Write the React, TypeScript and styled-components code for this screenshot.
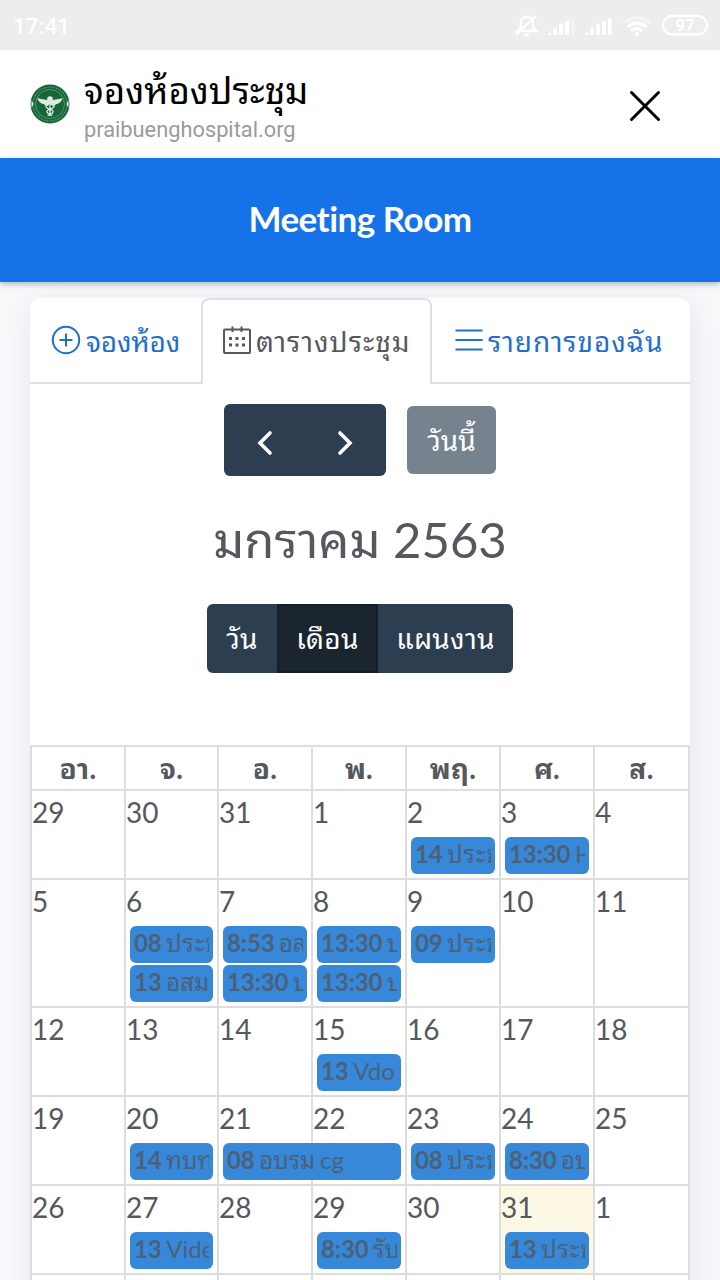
import React from "react";
import styled, { createGlobalStyle } from "styled-components";

const GlobalStyle = createGlobalStyle`
  * { box-sizing: border-box; }
  body {
    margin: 0;
    width: 720px;
    height: 1280px;
    overflow: hidden;
    background: #f8f9fb;
    font-family: Lato, "Noto Sans Thai Looped", "Noto Sans", sans-serif;
    color: #55585e;
  }
`;

const Screen = styled.div`
  width: 720px;
  height: 1280px;
  overflow: hidden;
  display: flex;
  flex-direction: column;
`;

const Thai = styled.span<{ $track?: number }>`
  letter-spacing: ${(p) => p.$track ?? 0}px;
`;

const StatusBar = styled.div`
  height: 50px;
  flex: none;
  display: flex;
  align-items: center;
  justify-content: space-between;
  padding: 1px 11px 0 13px;
  background: #ebedee;
  color: #fff;
  font: 500 22.5px/28px Roboto, sans-serif;
`;

const StatusIcons = styled.svg`
  display: block;
  width: 196px;
  height: 26px;
`;

const BrowserBar = styled.header`
  height: 108px;
  flex: none;
  display: flex;
  background: #fff;
  padding: 0 58px 0 30px;
`;

const Logo = styled.svg`
  width: 40px;
  height: 40px;
  margin-top: 34px;
  flex: none;
`;

const PageInfo = styled.div`
  flex: 1;
  margin-left: 14px;
  display: flex;
  flex-direction: column;
`;

const PageTitle = styled.div`
  height: 48px;
  margin-top: 16px;
  color: #000;
  font-size: 36.7px;
  line-height: 48px;
  white-space: nowrap;
`;

const PageHost = styled.div`
  color: #9b9b9b;
  font: 21.8px/32px Roboto, sans-serif;
`;

const CloseIcon = styled.svg`
  width: 34px;
  height: 34px;
  margin-top: 39px;
`;

const Banner = styled.div`
  height: 124px;
  flex: none;
  position: relative;
  display: flex;
  align-items: center;
  justify-content: center;
  padding-bottom: 4px;
  background: #1572e8;
  box-shadow: 0 2px 6px rgba(60, 70, 90, 0.4);
  color: #fff;
  font-size: 35px;
  font-weight: 700;
  font-variant-ligatures: none;
  letter-spacing: -0.5px;
`;

const Card = styled.main`
  width: 660px;
  flex: 1;
  margin: 16px auto 0;
  border-radius: 10px 10px 0 0;
  background: #fff;
  box-shadow: 2px 4px 30px rgba(50, 60, 80, 0.1);
`;

const Tabs = styled.nav`
  display: flex;
  height: 86px;
`;

const Tab = styled.a<{ $width: number; $active?: boolean }>`
  width: ${(p) => p.$width}px;
  height: 86px;
  display: flex;
  gap: 5px;
  padding: ${(p) => (p.$active ? "25px 0 0 18px" : "27px 0 0 21px")};
  white-space: nowrap;
  font-size: 28px;
  line-height: 33px;
  color: ${(p) => (p.$active ? "#55585e" : "#1f6fcd")};
  border: 0 solid #dee0e3;
  border-width: ${(p) => (p.$active ? "2px 2px 0" : "0 0 2px")};
  border-radius: ${(p) => (p.$active ? "8px 8px 0 0" : "0")};
`;

const TabIcon = styled.svg`
  width: 30px;
  height: 30px;
  flex: none;
  fill: none;
  stroke: currentColor;
  stroke-width: 2;
`;

const Toolbar = styled.div`
  height: 361px;
  display: flex;
  flex-direction: column;
  align-items: center;
`;

const NavRow = styled.div`
  display: flex;
  align-items: center;
  gap: 21px;
  height: 72px;
  margin-top: 20px;
`;

const ArrowGroup = styled.div`
  display: flex;
  width: 162px;
  height: 72px;
  border-radius: 6px;
  background: #2c3e50;
`;

const ArrowButton = styled.button`
  flex: 1;
  border: 0;
  padding: 8px 0 0;
  background: none;
  color: #fff;
`;

const TodayButton = styled.button`
  width: 89px;
  height: 68px;
  border: 0;
  border-radius: 6px;
  padding: 0 0 4px;
  background: #76828e;
  color: #fff;
  font: inherit;
  font-size: 28px;
`;

const MonthTitle = styled.h2`
  height: 72px;
  margin: 27px 0 0;
  font-size: 49px;
  font-weight: 400;
  line-height: 72px;
  white-space: nowrap;
`;

const ViewSwitch = styled.div`
  display: flex;
  height: 69px;
  margin-top: 29px;
  border-radius: 6px;
  overflow: hidden;
  background: #2c3e50;
`;

const ViewButton = styled.button<{ $width: number; $active?: boolean }>`
  width: ${(p) => p.$width}px;
  border: ${(p) => (p.$active ? "2px solid #151e27" : "0")};
  padding: 0 0 4px;
  background: ${(p) => (p.$active ? "#1a252f" : "none")};
  color: #fff;
  font: inherit;
  font-size: 28px;
`;

const Calendar = styled.section`
  border: solid #ddd;
  border-width: 2px 0 0 2px;
`;

const columns = "94px 93px 94px 94px 94px 94px 95px";

const HeadRow = styled.div`
  display: grid;
  grid-template-columns: ${columns};
  height: 44px;
`;

const HeadCell = styled.div`
  border: solid #ddd;
  border-width: 0 2px 2px 0;
  text-align: center;
  font-size: 28px;
  font-weight: 700;
  line-height: 42px;
`;

const WeekRow = styled.div<{ $lines: number }>`
  display: grid;
  grid-template-columns: ${columns};
  grid-template-rows: 44px repeat(${(p) => p.$lines}, 37px) 4px;
  row-gap: 2px;
`;

const Day = styled.div<{ $col: number; $today?: boolean }>`
  grid-column: ${(p) => p.$col};
  grid-row: 1 / -1;
  border: solid #ddd;
  border-width: 0 2px 2px 0;
  background: ${(p) => (p.$today ? "#fcf8e3" : "#fff")};
  font-size: 28px;
  line-height: 43px;
`;

const Event = styled.div<{ $col: number; $span: number; $line: number }>`
  grid-column: ${(p) => p.$col} / span ${(p) => p.$span};
  grid-row: ${(p) => p.$line + 1};
  margin: 0 6px 0 4px;
  padding: 0 4px;
  border-radius: 6px;
  background: #3788d8;
  color: #4b6179;
  font-size: 24px;
  line-height: 34px;
`;

const EventText = styled.div`
  height: 37px;
  overflow: hidden;
  white-space: nowrap;
  letter-spacing: -0.1px;
  word-spacing: -1.5px;
`;

type Ev = { col: number; time: string; title: string; line?: number; span?: number };
type Week = { days: number[]; events: Ev[]; today?: number };

const weeks: Week[] = [
  {
    days: [29, 30, 31, 1, 2, 3, 4],
    events: [
      { col: 5, time: "14", title: "ประชุม" },
      { col: 6, time: "13:30", title: "HA" },
    ],
  },
  {
    days: [5, 6, 7, 8, 9, 10, 11],
    events: [
      { col: 2, time: "08", title: "ประชุม" },
      { col: 2, time: "13", title: "อสม", line: 2 },
      { col: 3, time: "8:53", title: "อสม" },
      { col: 3, time: "13:30", title: "ประชุม", line: 2 },
      { col: 4, time: "13:30", title: "ประชุม" },
      { col: 4, time: "13:30", title: "ประชุม", line: 2 },
      { col: 5, time: "09", title: "ประชุม" },
    ],
  },
  { days: [12, 13, 14, 15, 16, 17, 18], events: [{ col: 4, time: "13", title: "Vdo" }] },
  {
    days: [19, 20, 21, 22, 23, 24, 25],
    events: [
      { col: 2, time: "14", title: "ทบทวน" },
      { col: 3, time: "08", title: "อบรม cg", span: 2 },
      { col: 5, time: "08", title: "ประชุม" },
      { col: 6, time: "8:30", title: "อบรม" },
    ],
  },
  {
    days: [26, 27, 28, 29, 30, 31, 1],
    today: 5,
    events: [
      { col: 2, time: "13", title: "Video" },
      { col: 4, time: "8:30", title: "รับ" },
      { col: 6, time: "13", title: "ประชุม" },
    ],
  },
  { days: [2, 3, 4, 5, 6, 7, 8], events: [] },
];

const dayNames = ["อา.", "จ.", "อ.", "พ.", "พฤ.", "ศ.", "ส."];

function Signal({ x, full }: { x: number; full?: boolean }) {
  return (
    <g fill="#fff" stroke="none" transform={`translate(${x} 0)`}>
      <path d="M0 22l4-4v4zM6 22v-6l4-2v8zM12 22v-10l4-2v12zM18 22V9l4-2v15z" />
      <path d="M24 22V5.500h3.500v16.500z" opacity={full ? 1 : 0.35} />
    </g>
  );
}

export default function App() {
  return (
    <Screen>
      <GlobalStyle />
      <StatusBar>
        <span>17:41</span>
        <StatusIcons viewBox="0 0 196 26" fill="none" stroke="#fff" strokeWidth="2">
          <path d="M5 18c3-2 3-5 3-8 0-4 2-6 6-6s6 2 6 6c0 3 0 6 3 8zM11 22h5M3 22L23 2.500" strokeWidth="2.300" />
          <Signal x={34} />
          <Signal x={71} full />
          <path d="M111 10q13-10 26 0" strokeWidth="3" opacity=".45" />
          <path d="M114.500 14q9.500-8 19 0M118.500 18q5.500-5 11 0" strokeWidth="3.300" />
          <circle cx="124" cy="21" r="2.300" fill="#fff" stroke="none" />
          <rect x="150" y="3" width="44" height="18.500" rx="9.200" strokeWidth="2.300" />
          <text x="172" y="18" textAnchor="middle" fill="#fff" stroke="none" fontFamily="Roboto" fontSize="17" fontWeight="700">97</text>
        </StatusIcons>
      </StatusBar>

      <BrowserBar>
        <Logo viewBox="0 0 40 40" fill="none">
          <circle cx="20" cy="20" r="19.5" fill="#17663a" />
          <circle cx="20" cy="20" r="17" stroke="#5d9670" strokeWidth="1.6" strokeDasharray="1 1.2" />
          <circle cx="20" cy="20" r="14.5" stroke="#7fae8e" strokeWidth=".6" />
          <path d="M1.5 16l2 4-2 4zM38.5 16l-2 4 2 4z" fill="#e8f2eb" />
          <path d="M20 17c-3-2-8-1-12.500-3 1 4 4 6 7 6-1 1 1 2 3 2l2.500-2 2.500 2c2 0 4-1 3-2 3 0 6-2 7-6-4.500 2-9.500 1-12.500 3z" fill="#dcebe1" />
          <path d="M20 13v19M16 22c0 4 8 3 7 6s-5 2-5 4M24 22c0 4-8 3-7 6s5 2 5 4" stroke="#dcebe1" strokeWidth="1.3" />
          <circle cx="20" cy="15" r="2.800" fill="#dcebe1" />
        </Logo>
        <PageInfo>
          <PageTitle>จองห้องประชุม</PageTitle>
          <PageHost>praibuenghospital.org</PageHost>
        </PageInfo>
        <CloseIcon viewBox="0 0 34 34" stroke="#000" strokeWidth="3" strokeLinecap="round">
          <path d="M3.5 3.5l27 27M30.5 3.5l-27 27" />
        </CloseIcon>
      </BrowserBar>

      <Banner>Meeting Room</Banner>

      <Card>
        <Tabs>
          <Tab $width={171}>
            <TabIcon viewBox="0 0 30 30">
              <circle cx="15" cy="15" r="13.2" />
              <path d="M15 8.5v13M8.5 15h13" />
            </TabIcon>
            <Thai $track={-0.2}>จองห้อง</Thai>
          </Tab>
          <Tab $width={231} $active>
            <TabIcon viewBox="0 0 30 30">
              <rect x="3" y="4.5" width="26" height="23.5" rx="1" />
              <path d="M11.5 1.5V7M20.5 1.5V7" />
              <path d="M8 13.5h3M14.5 13.5h3M21 13.5h3M8 20h3M14.5 20h3M21 20h3" strokeWidth="3" />
            </TabIcon>
            <Thai $track={1}>ตารางประชุม</Thai>
          </Tab>
          <Tab $width={258}>
            <TabIcon viewBox="0 0 30 30">
              <path d="M2.5 5.5h27M2.5 15h27M2.5 24.5h27" />
            </TabIcon>
            <Thai $track={0.9}>รายการของฉัน</Thai>
          </Tab>
        </Tabs>

        <Toolbar>
          <NavRow>
            <ArrowGroup>
              <ArrowButton>
                <svg width="18" height="28" viewBox="0 0 18 28" fill="none" stroke="#fff" strokeWidth="3.6" strokeLinecap="round">
                  <path d="M14 4L4 14l10 10" />
                </svg>
              </ArrowButton>
              <ArrowButton>
                <svg width="18" height="28" viewBox="0 0 18 28" fill="none" stroke="#fff" strokeWidth="3.6" strokeLinecap="round">
                  <path d="M3 4l10 10L3 24" />
                </svg>
              </ArrowButton>
            </ArrowGroup>
            <TodayButton>วันนี้</TodayButton>
          </NavRow>
          <MonthTitle>มกราคม 2563</MonthTitle>
          <ViewSwitch>
            <ViewButton $width={70}><Thai $track={0.3}>วัน</Thai></ViewButton>
            <ViewButton $width={101} $active><Thai $track={0.3}>เดือน</Thai></ViewButton>
            <ViewButton $width={135}><Thai $track={0.3}>แผนงาน</Thai></ViewButton>
          </ViewSwitch>
        </Toolbar>

        <Calendar>
          <HeadRow>
            {dayNames.map((name) => (
              <HeadCell key={name}><Thai $track={0.3}>{name}</Thai></HeadCell>
            ))}
          </HeadRow>
          {weeks.map((week, w) => (
            <WeekRow key={w} $lines={week.events.some((e) => e.line === 2) ? 2 : 1}>
              {week.days.map((day, i) => (
                <Day key={i} $col={i + 1} $today={week.today === i}>{day}</Day>
              ))}
              {week.events.map((e, i) => (
                <Event key={i} $col={e.col} $span={e.span ?? 1} $line={e.line ?? 1}>
                  <EventText>
                    <b>{e.time}</b> <Thai $track={e.title === "ประชุม" ? 0.9 : 0}>{e.title}</Thai>
                  </EventText>
                </Event>
              ))}
            </WeekRow>
          ))}
        </Calendar>
      </Card>
    </Screen>
  );
}
